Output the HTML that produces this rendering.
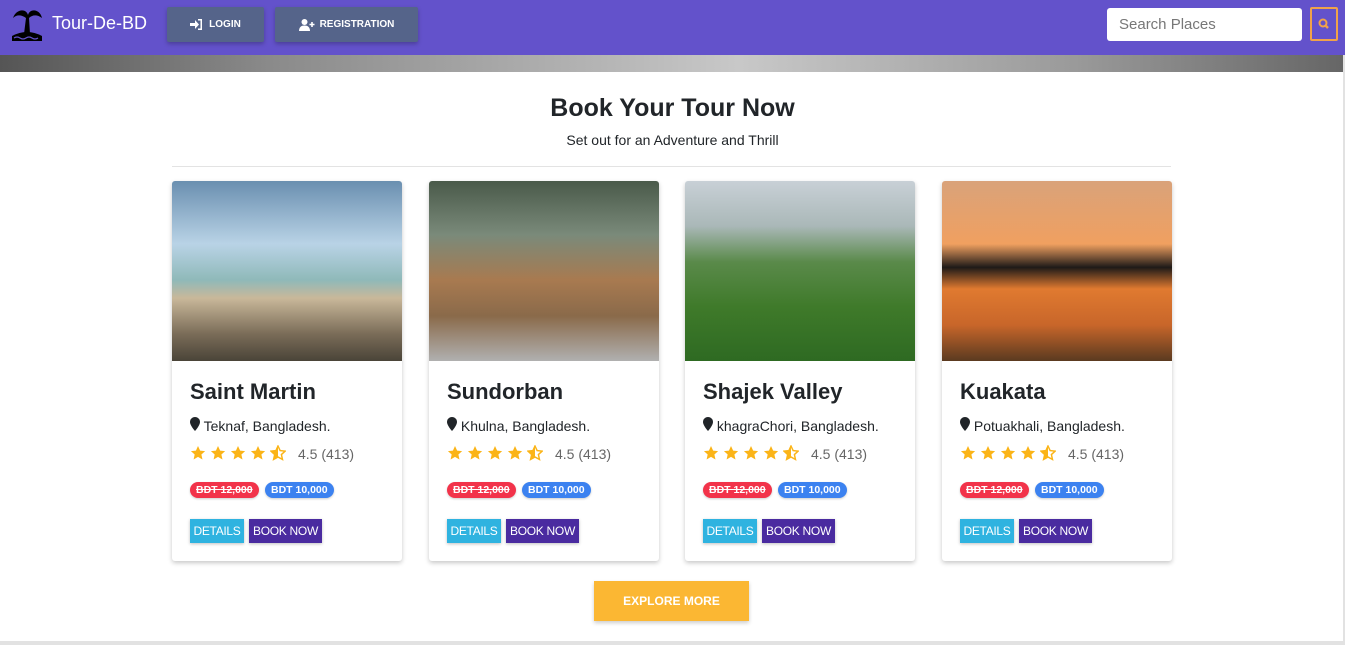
<!DOCTYPE html>
<html><head><meta charset="utf-8"><style>
*{box-sizing:border-box;margin:0;padding:0}
body{width:1345px;height:645px;overflow:hidden;background:#fff;font-family:"Liberation Sans",Arial,sans-serif;color:#212529;position:relative}
.nav{position:absolute;left:0;top:0;width:1345px;height:55px;background:#6352cb}
.strip{position:absolute;left:0;top:55px;width:1343px;height:17px;background:linear-gradient(90deg,#555 0%,#8a8a8a 20%,#b5b5b5 45%,#c8c8c8 55%,#9a9a9a 80%,#666 100%)}
.brand{position:absolute;left:52px;top:13px;color:#fff;font-size:18px}
.nb{position:absolute;top:7px;height:35px;background:#55648a;color:#fff;font-size:10px;font-weight:bold;display:flex;align-items:center;justify-content:center;box-shadow:0 2px 4px rgba(0,0,0,.25);border-radius:2px;white-space:nowrap}
.search{position:absolute;left:1107px;top:8px;width:195px;height:33px;background:#fff;border-radius:3px;color:#777;font-size:15px;padding:8px 12px}
.sbtn{position:absolute;left:1310px;top:7px;width:28px;height:34px;border:2px solid #f0a24a;border-radius:2px}
h1{position:absolute;left:0;width:1345px;top:94px;text-align:center;font-size:25px;font-weight:bold}
.sub{position:absolute;left:0;width:1345px;top:132px;text-align:center;font-size:14px}
.hr{position:absolute;left:172px;width:999px;top:166px;border-top:1px solid #e3e3e3}
.card{position:absolute;top:181px;width:230px;height:380px;background:#fff;border-radius:3px;box-shadow:0 2px 5px rgba(0,0,0,.22);overflow:hidden}
.img{height:180px}
.t{position:absolute;left:18px;top:198px;font-size:22px;font-weight:bold}
.loc{position:absolute;left:18px;top:236px;font-size:14px;white-space:nowrap}
.stars{position:absolute;left:18px;top:264px}
.rate{position:absolute;left:126px;top:265px;font-size:14px;color:#666}
.b1,.b2{position:absolute;top:301px;height:16px;border-radius:8px;color:#fff;font-size:10.5px;font-weight:bold;padding:2px 6px;box-shadow:0 1px 2px rgba(0,0,0,.2);white-space:nowrap}
.b1{left:18px;background:#f2334a;text-decoration:line-through}
.b2{left:93px;background:#3c82f0}
.d,.bk{position:absolute;top:338px;height:24px;color:#fff;font-size:12px;line-height:24px;text-align:center;box-shadow:0 1px 3px rgba(0,0,0,.25);white-space:nowrap;letter-spacing:-.3px}
.d{left:18px;width:54px;background:#2fb3e0}
.bk{left:77px;width:73px;background:#4a2ba0}
.explore{position:absolute;left:594px;top:581px;width:155px;height:40px;background:#fbb733;color:#fff;font-size:12px;font-weight:bold;text-align:center;line-height:40px;box-shadow:0 2px 4px rgba(0,0,0,.2)}
</style></head><body>
<svg width="0" height="0" style="position:absolute"><defs>
<symbol id="st" viewBox="0 0 24 24"><path d="M12 1.5l3.2 6.9 7.5.8-5.6 5.1 1.6 7.4L12 17.9l-6.6 3.8 1.6-7.4L1.4 9.2l7.5-.8z" fill="#fbb417"/></symbol>
<symbol id="hs" viewBox="0 0 24 24"><path d="M12 1.5l3.2 6.9 7.5.8-5.6 5.1 1.6 7.4L12 17.9l-6.6 3.8 1.6-7.4L1.4 9.2l7.5-.8z" fill="none" stroke="#fbb417" stroke-width="2.2"/><path d="M12 1.5 L8.9 8.4 1.4 9.2 7 14.3 5.4 21.7 12 17.9z" fill="#fbb417"/></symbol>
<symbol id="pin" viewBox="0 0 10 14"><path d="M5 0C2.2 0 0 2.2 0 5c0 3.5 5 9 5 9s5-5.5 5-9C10 2.2 7.8 0 5 0z" fill="#212529"/></symbol>
</defs></svg>
<div class="nav"></div>
<div class="strip"></div>
<svg style="position:absolute;left:10px;top:6px" width="34" height="36" viewBox="0 0 34 36"><path d="M3 12 C6 3 16 2 18 9 C20 2 30 3 32 12 C27 8 22 9 19 12 L20 28 L14 28 L16 12 C12 9 7 8 3 12Z" fill="#000"/><path d="M2 30 Q17 22 32 30 L32 35 L2 35Z" fill="#000"/><path d="M4 32 q3-2 6 0 q3 2 6 0 q3-2 6 0 q3 2 6 0" stroke="#6352cb" fill="none" stroke-width="1.2"/></svg>
<div class="brand">Tour-De-BD</div>
<div class="nb" style="left:167px;width:97px"><svg width="13" height="11" viewBox="0 0 13 11" style="margin-right:6px"><path d="M0 4h5V1l4 4.5-4 4.5V7H0z" fill="#fff"/><path d="M8 0h4v11H8V9.5h2.5v-8H8z" fill="#fff"/></svg>LOGIN</div>
<div class="nb" style="left:275px;width:143px"><svg width="16" height="12" viewBox="0 0 16 12" style="margin-right:5px"><circle cx="5.5" cy="3" r="3" fill="#fff"/><path d="M0 12c0-4 2.5-5.5 5.5-5.5S11 8 11 12z" fill="#fff"/><path d="M13 3v5M10.5 5.5h5" stroke="#fff" stroke-width="1.6"/></svg>REGISTRATION</div>
<div class="search">Search Places</div>
<div class="sbtn"><svg width="24" height="30" viewBox="0 0 24 30"><circle cx="11" cy="14" r="3.5" stroke="#f0a24a" stroke-width="2" fill="none"/><path d="M13.5 16.5 L16 19" stroke="#f0a24a" stroke-width="2.5"/></svg></div>
<h1>Book Your Tour Now</h1>
<div class="sub">Set out for an Adventure and Thrill</div>
<div class="hr"></div>

<div class="card" style="left:172px"><div class="img" style="background:linear-gradient(180deg,#6a8fb0 0%,#b9d3e6 35%,#8fb9b9 55%,#c9b89a 65%,#7a6c58 85%,#4a4438 100%)"></div><div class="t">Saint Martin</div><div class="loc"><svg width="10" height="14"><use href="#pin"/></svg> Teknaf, Bangladesh.</div><div class="stars"><svg width="98" height="16"><use href="#st" x="0" width="16" height="16"/><use href="#st" x="20" width="16" height="16"/><use href="#st" x="40" width="16" height="16"/><use href="#st" x="60" width="16" height="16"/><use href="#hs" x="80" width="16" height="16"/></svg></div><div class="rate">4.5 (413)</div><div class="b1">BDT 12,000</div><div class="b2">BDT 10,000</div><div class="d">DETAILS</div><div class="bk">BOOK NOW</div></div>
<div class="card" style="left:429px"><div class="img" style="background:linear-gradient(180deg,#4a5a4a 0%,#7a8a7a 30%,#a87a50 55%,#8a6a4a 75%,#b0b0b0 100%)"></div><div class="t">Sundorban</div><div class="loc"><svg width="10" height="14"><use href="#pin"/></svg> Khulna, Bangladesh.</div><div class="stars"><svg width="98" height="16"><use href="#st" x="0" width="16" height="16"/><use href="#st" x="20" width="16" height="16"/><use href="#st" x="40" width="16" height="16"/><use href="#st" x="60" width="16" height="16"/><use href="#hs" x="80" width="16" height="16"/></svg></div><div class="rate">4.5 (413)</div><div class="b1">BDT 12,000</div><div class="b2">BDT 10,000</div><div class="d">DETAILS</div><div class="bk">BOOK NOW</div></div>
<div class="card" style="left:685px"><div class="img" style="background:linear-gradient(180deg,#c8d0d6 0%,#aab8b8 25%,#5a8a4a 45%,#3f7a2a 70%,#2e6a22 100%)"></div><div class="t">Shajek Valley</div><div class="loc"><svg width="10" height="14"><use href="#pin"/></svg> khagraChori, Bangladesh.</div><div class="stars"><svg width="98" height="16"><use href="#st" x="0" width="16" height="16"/><use href="#st" x="20" width="16" height="16"/><use href="#st" x="40" width="16" height="16"/><use href="#st" x="60" width="16" height="16"/><use href="#hs" x="80" width="16" height="16"/></svg></div><div class="rate">4.5 (413)</div><div class="b1">BDT 12,000</div><div class="b2">BDT 10,000</div><div class="d">DETAILS</div><div class="bk">BOOK NOW</div></div>
<div class="card" style="left:942px"><div class="img" style="background:linear-gradient(180deg,#d9a27a 0%,#f0a060 35%,#1e1a18 48%,#e07a30 60%,#c8662a 80%,#5a3a20 100%)"></div><div class="t">Kuakata</div><div class="loc"><svg width="10" height="14"><use href="#pin"/></svg> Potuakhali, Bangladesh.</div><div class="stars"><svg width="98" height="16"><use href="#st" x="0" width="16" height="16"/><use href="#st" x="20" width="16" height="16"/><use href="#st" x="40" width="16" height="16"/><use href="#st" x="60" width="16" height="16"/><use href="#hs" x="80" width="16" height="16"/></svg></div><div class="rate">4.5 (413)</div><div class="b1">BDT 12,000</div><div class="b2">BDT 10,000</div><div class="d">DETAILS</div><div class="bk">BOOK NOW</div></div>

<div class="explore">EXPLORE MORE</div>
<div style="position:absolute;left:0;top:641px;width:1345px;height:4px;background:#e2e2e2"></div>
<div style="position:absolute;left:1343px;top:55px;width:2px;height:590px;background:#e2e2e2"></div>
</body></html>
